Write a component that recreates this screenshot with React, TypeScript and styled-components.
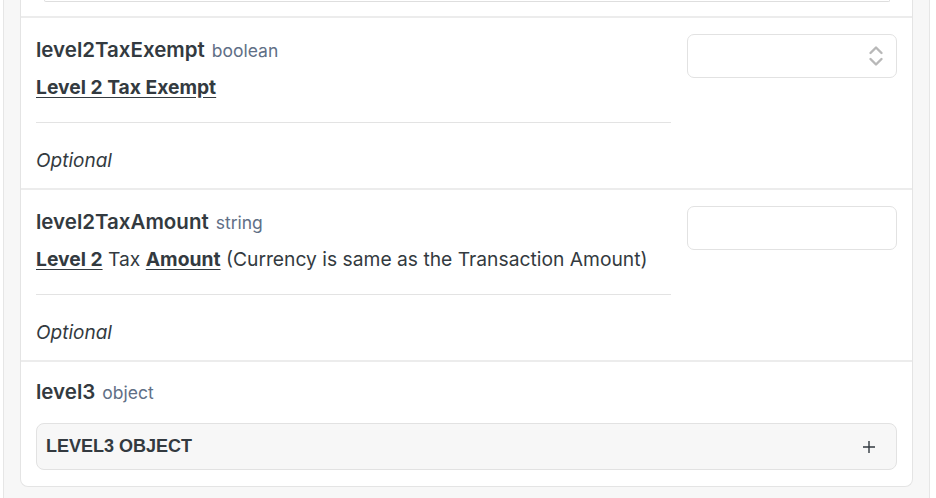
import React from "react";
import styled, { createGlobalStyle } from "styled-components";

const Global = createGlobalStyle`
  html, body { margin: 0; padding: 0; background: #ffffff; }
  body { font-family: Inter, "Noto Sans", sans-serif; color: #333a40; overflow: hidden; }
  * { box-sizing: border-box; }
`;

const Frame = styled.div`
  width: 927px;
  margin-left: 3px;
  background: #f7f7f7;
  border-left: 1px solid #e6e6e6;
  border-right: 1px solid #e6e6e6;
  padding: 0 16px 12px 16px;
  height: 498px;
`;

const Card = styled.div`
  background: #ffffff;
  border: 1px solid #e4e4e4;
  border-top: none;
  border-radius: 0 0 8px 8px;
  display: flex;
  flex-direction: column;
`;

const PrevTail = styled.div`
  margin: 0 22px 0 23px;
  height: 2px;
  border: 1px solid #dedede;
  border-top: none;
  border-radius: 0 0 4px 4px;
`;

const Spacer = styled.div`
  height: 14px;
`;

const Row = styled.div`
  border-top: 2px solid #ececec;
  padding: 16px 15px 0 15px;
  display: flex;
  gap: 16px;
`;

const Main = styled.div`
  flex: 1;
  min-width: 0;
`;

const Title = styled.div`
  display: flex;
  align-items: baseline;
  gap: 7px;
  height: 32px;
  padding-top: 3px;
`;

const Name = styled.span`
  font-size: 20.5px;
  font-weight: 600;
  color: #333a40;
`;

const Type = styled.span`
  font-size: 17.5px;
  color: #5f6f86;
`;

const Desc = styled.div`
  font-size: 19.25px;
  color: #333a40;
  line-height: 26px;
  margin-top: 8px;
  padding-bottom: 22px;
  border-bottom: 1px solid #e3e3e3;
`;

const Strong = styled.span`
  font-weight: 700;
  text-decoration: underline;
  text-underline-offset: 3px;
`;

const Optional = styled.div`
  font-size: 19px;
  font-style: italic;
  color: #333a40;
  height: 65px;
  display: flex;
  align-items: center;
  padding-top: 10px;
`;

const Field = styled.div`
  width: 210px;
  height: 44px;
  border: 1px solid #e2e2e2;
  border-radius: 7px;
  background: #fff;
  display: flex;
  align-items: center;
  justify-content: flex-end;
  padding-right: 12px;
  flex-shrink: 0;
`;

const ObjectRow = styled.div`
  border-top: 2px solid #ececec;
  padding: 14px 15px 16px 15px;
`;

const ObjBox = styled.div`
  margin-top: 15px;
  height: 47px;
  background: #f7f7f7;
  border: 1px solid #e2e2e2;
  border-radius: 8px;
  display: flex;
  align-items: center;
  justify-content: space-between;
  padding: 0 20px 0 9px;
`;

const ObjLabel = styled.span`
  font-family: "Liberation Sans", Arial, sans-serif;
  font-weight: 700;
  font-size: 18px;
  color: #333a40;
`;

const Chevrons = () => (
  <svg width="16" height="24" viewBox="0 0 16 24" fill="none" stroke="#b8b8b8" strokeWidth="2.4" strokeLinecap="round" strokeLinejoin="round">
    <path d="M2.5 9 L8 3.5 L13.5 9" />
    <path d="M2.5 15 L8 20.5 L13.5 15" />
  </svg>
);

const Plus = () => (
  <svg width="14" height="14" viewBox="0 0 14 14" stroke="#333a40" strokeWidth="1.4">
    <path d="M7 1 V13 M1 7 H13" />
  </svg>
);

export default function App() {
  return (
    <>
      <Global />
      <Frame>
        <Card>
          <PrevTail />
          <Spacer />
          <Row>
            <Main>
              <Title>
                <Name>level2TaxExempt</Name>
                <Type>boolean</Type>
              </Title>
              <Desc>
                <Strong>Level 2 Tax Exempt</Strong>
              </Desc>
              <Optional>Optional</Optional>
            </Main>
            <Field>
              <Chevrons />
            </Field>
          </Row>
          <Row>
            <Main>
              <Title>
                <Name>level2TaxAmount</Name>
                <Type>string</Type>
              </Title>
              <Desc>
                <Strong>Level 2</Strong> Tax <Strong>Amount</Strong> (Currency is same as the Transaction Amount)
              </Desc>
              <Optional>Optional</Optional>
            </Main>
            <Field />
          </Row>
          <ObjectRow>
            <Title>
              <Name>level3</Name>
              <Type>object</Type>
            </Title>
            <ObjBox>
              <ObjLabel>LEVEL3 OBJECT</ObjLabel>
              <Plus />
            </ObjBox>
          </ObjectRow>
        </Card>
      </Frame>
    </>
  );
}
